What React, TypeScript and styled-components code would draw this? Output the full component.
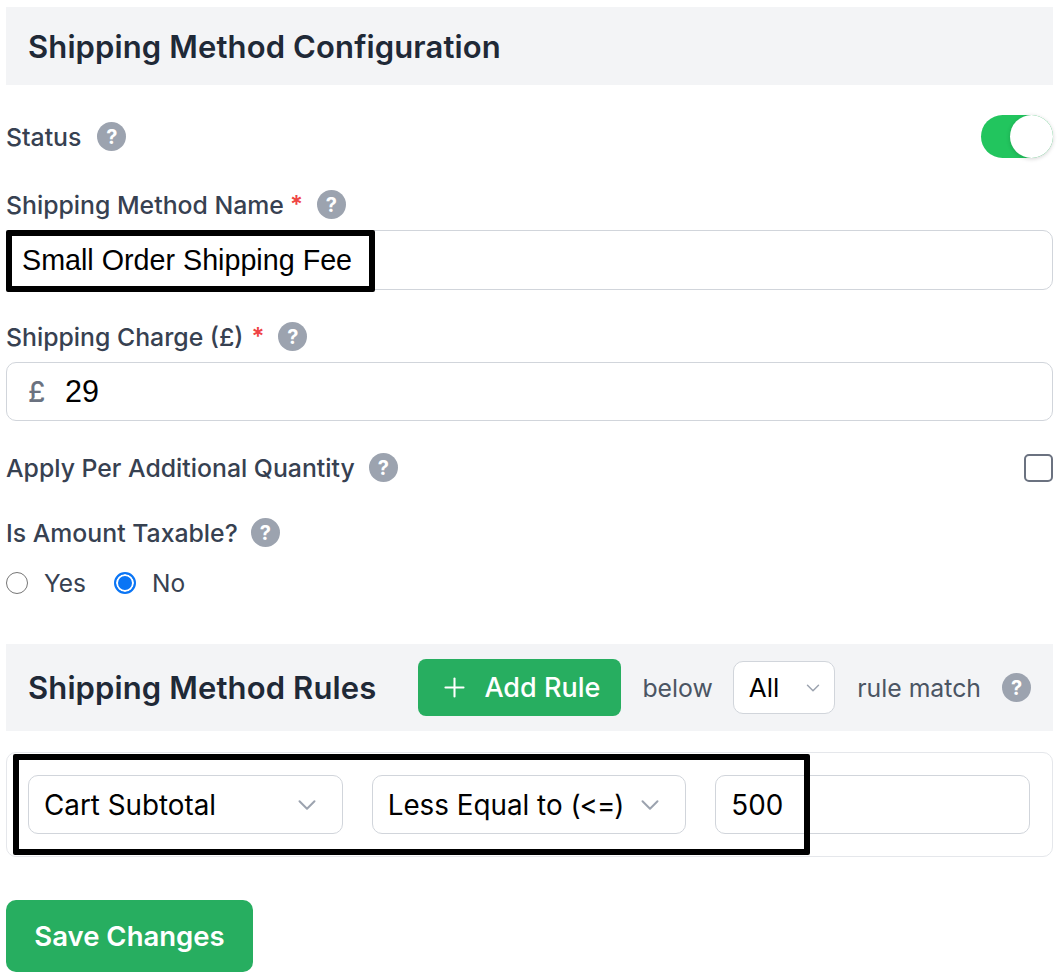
import React from 'react';
import styled, { createGlobalStyle } from 'styled-components';
import { ChevronDown, Plus } from 'lucide-react';

const GlobalStyle = createGlobalStyle`
  html, body {
    margin: 0;
    padding: 0;
    background: #fff;
    font-family: Inter, "Liberation Sans", sans-serif;
  }
`;

const Page = styled.div`
  position: relative;
  width: 1060px;
  height: 978px;
  box-sizing: border-box;
  padding: 7px 7px 0 6px;
  overflow: hidden;
`;

const SectionHeader = styled.div<{ $height: number; $top?: number }>`
  display: flex;
  align-items: center;
  height: ${({ $height }) => $height}px;
  margin-top: ${({ $top }) => $top ?? 0}px;
  padding-left: 22px;
  padding-right: 22px;
  background: #f3f4f6;
`;

const SectionTitle = styled.h2`
  margin: 0;
  font-size: 31px;
  font-weight: 600;
  letter-spacing: 0.12px;
  color: #1f2937;
  white-space: nowrap;
`;

const Row = styled.div<{ $top: number; $height: number }>`
  display: flex;
  align-items: center;
  justify-content: space-between;
  margin-top: ${({ $top }) => $top}px;
  height: ${({ $height }) => $height}px;
`;

const LabelGroup = styled.div`
  display: flex;
  align-items: center;
`;

const Label = styled.span`
  font-size: 24.8px;
  font-weight: 500;
  color: #374151;
  white-space: nowrap;
`;

const Required = styled.span<{ $gap?: number }>`
  margin-left: ${({ $gap }) => $gap ?? 6}px;
  font-size: 24px;
  font-weight: 600;
  line-height: 1;
  color: #ef4444;
`;

const Help = styled.span<{ $gap?: number }>`
  display: inline-flex;
  align-items: center;
  justify-content: center;
  width: 29px;
  height: 29px;
  margin-left: ${({ $gap }) => $gap ?? 14}px;
  border-radius: 50%;
  background: #9ca3af;
  color: #fff;
  font-size: 20px;
  font-weight: 700;
  flex-shrink: 0;
`;

const Toggle = styled.span`
  position: relative;
  display: block;
  width: 72px;
  height: 43px;
  border-radius: 22px;
  background: #22c55e;
`;

const ToggleKnob = styled.span`
  position: absolute;
  top: 0;
  right: 0;
  width: 43px;
  height: 43px;
  border-radius: 50%;
  background: #fff;
  box-shadow: 0 1px 4px rgba(0, 0, 0, 0.18);
`;

const Field = styled.div<{ $top?: number; $height: number; $width?: number }>`
  display: flex;
  align-items: center;
  box-sizing: border-box;
  height: ${({ $height }) => $height}px;
  width: ${({ $width }) => ($width ? `${$width}px` : 'auto')};
  margin-top: ${({ $top }) => $top ?? 0}px;
  padding: 0 15px;
  background: #fff;
  border: 1px solid #d1d5db;
  border-radius: 10px;
  font-family: "Liberation Sans", Arial, sans-serif;
  font-size: 28.7px;
  color: #000;
  white-space: nowrap;
`;

const Prefix = styled.span`
  width: 37px;
  margin-left: 6px;
  color: #6b7280;
  font-family: Inter, sans-serif;
  font-size: 28px;
  font-weight: 500;
`;

const Amount = styled.span`
  font-size: 30.5px;
`;

const Checkbox = styled.span`
  display: block;
  box-sizing: border-box;
  width: 29px;
  height: 28px;
  border: 2px solid #6b7280;
  border-radius: 5px;
  background: #fff;
`;

const RadioRow = styled.div`
  display: flex;
  align-items: center;
  height: 30px;
  margin-top: 21px;
`;

const RadioCircle = styled.span<{ $checked?: boolean; $gap?: number }>`
  display: block;
  box-sizing: border-box;
  width: 22px;
  height: 22px;
  margin-left: ${({ $gap }) => $gap ?? 0}px;
  border-radius: 50%;
  border: ${({ $checked }) => ($checked ? '2px solid #0a75f5' : '1.5px solid #767676')};
  background: ${({ $checked }) => ($checked ? '#0a75f5' : '#fff')};
  box-shadow: ${({ $checked }) => ($checked ? 'inset 0 0 0 2px #fff' : 'none')};
`;

const RadioText = styled.span`
  margin-left: 16px;
  font-size: 24.5px;
  color: #374151;
`;

const AddButton = styled.div`
  display: flex;
  align-items: center;
  justify-content: center;
  gap: 14px;
  width: 203px;
  height: 57px;
  margin-left: 42px;
  border-radius: 8px;
  background: #27ae60;
  color: #fff;
  font-size: 27px;
  font-weight: 500;
  flex-shrink: 0;
`;

const HeaderText = styled.span<{ $gap: number }>`
  margin-left: ${({ $gap }) => $gap}px;
  font-size: 24.8px;
  color: #4b5563;
  white-space: nowrap;
`;

const SelectBox = styled(Field)`
  justify-content: space-between;
  color: #000;
  padding-right: 20px;
`;

const HeaderSelect = styled(SelectBox)`
  margin-left: 20px;
  padding: 0 10px 0 15px;
  font-size: 26px;
  font-family: Inter, sans-serif;
`;

const RuleCard = styled.div`
  display: flex;
  align-items: center;
  gap: 29px;
  box-sizing: border-box;
  height: 105px;
  margin-top: 21px;
  padding: 0 22px 0 21px;
  border: 1px solid #e5e7eb;
  border-radius: 10px;
`;

const RuleField = styled(SelectBox)`
  flex: 1 1 0;
  font-family: Inter, sans-serif;
  font-size: 27.8px;
`;

const Operator = styled.span`
  letter-spacing: -1px;
`;

const SaveButton = styled.div`
  display: flex;
  align-items: center;
  justify-content: center;
  width: 247px;
  height: 72px;
  margin-top: 43px;
  border-radius: 10px;
  background: #27ae60;
  color: #fff;
  font-size: 27.5px;
  font-weight: 600;
`;

const Annotation = styled.div<{ $x: number; $y: number; $w: number; $h: number; $border: number }>`
  position: absolute;
  left: ${({ $x }) => $x}px;
  top: ${({ $y }) => $y}px;
  width: ${({ $w }) => $w}px;
  height: ${({ $h }) => $h}px;
  box-sizing: border-box;
  border: ${({ $border }) => $border}px solid #000;
  border-radius: 2px;
  pointer-events: none;
`;

const Chevron = ({ size, color }: { size: number; color: string }) => (
  <ChevronDown size={size} color={color} strokeWidth={1.6} />
);

export default function App() {
  return (
    <>
      <GlobalStyle />
      <Page>
        <SectionHeader $height={78}>
          <SectionTitle>Shipping Method Configuration</SectionTitle>
        </SectionHeader>

        <Row $top={30} $height={43}>
          <LabelGroup>
            <Label>Status</Label>
            <Help $gap={16}>?</Help>
          </LabelGroup>
          <Toggle>
            <ToggleKnob />
          </Toggle>
        </Row>

        <Row $top={25} $height={43}>
          <LabelGroup>
            <Label>Shipping Method Name</Label>
            <Required>*</Required>
            <Help>?</Help>
          </LabelGroup>
        </Row>
        <Field $top={4} $height={60}>Small Order Shipping Fee</Field>

        <Row $top={25} $height={43}>
          <LabelGroup>
            <Label>Shipping Charge (£)</Label>
            <Required $gap={8}>*</Required>
            <Help>?</Help>
          </LabelGroup>
        </Row>
        <Field $top={4} $height={59}>
          <Prefix>£</Prefix>
          <Amount>29</Amount>
        </Field>

        <Row $top={32} $height={29}>
          <LabelGroup>
            <Label>Apply Per Additional Quantity</Label>
            <Help>?</Help>
          </LabelGroup>
          <Checkbox />
        </Row>

        <Row $top={36} $height={29}>
          <LabelGroup>
            <Label>Is Amount Taxable?</Label>
            <Help $gap={13}>?</Help>
          </LabelGroup>
        </Row>

        <RadioRow>
          <RadioCircle />
          <RadioText>Yes</RadioText>
          <RadioCircle $checked $gap={28} />
          <RadioText>No</RadioText>
        </RadioRow>

        <SectionHeader $height={87} $top={46}>
          <SectionTitle>Shipping Method Rules</SectionTitle>
          <AddButton>
            <Plus size={31} strokeWidth={1.6} />
            Add Rule
          </AddButton>
          <HeaderText $gap={21}>below</HeaderText>
          <HeaderSelect $height={53} $width={103}>
            All
            <Chevron size={22} color="#9ca3af" />
          </HeaderSelect>
          <HeaderText $gap={22}>rule match</HeaderText>
          <Help $gap={21}>?</Help>
        </SectionHeader>

        <RuleCard>
          <RuleField $height={59}>
            Cart Subtotal
            <Chevron size={30} color="#9ca3af" />
          </RuleField>
          <RuleField $height={59}>
            <span>
              Less Equal to <Operator>(&lt;=)</Operator>
            </span>
            <Chevron size={30} color="#9ca3af" />
          </RuleField>
          <RuleField $height={59}>500</RuleField>
        </RuleCard>

        <SaveButton>Save Changes</SaveButton>

        <Annotation $x={6} $y={230} $w={369} $h={62} $border={6} />
        <Annotation $x={13} $y={754} $w={797} $h={101} $border={6} />
      </Page>
    </>
  );
}
